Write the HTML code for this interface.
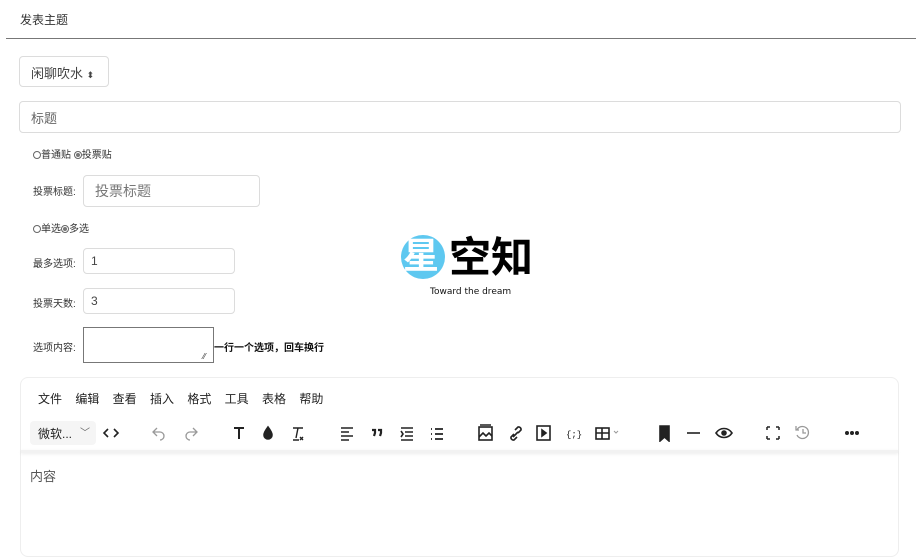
<!DOCTYPE html><html><head><meta charset="utf-8"><style>
body{margin:0;width:916px;height:531px;overflow:hidden;background:#fff;font-family:"Liberation Sans","Noto Sans CJK SC",sans-serif;color:#222;position:relative}
.a{position:absolute}
.box{position:absolute;border:1px solid #dcdcdc;border-radius:4px;box-sizing:border-box;background:#fff}
.s{font-size:10px;color:#333}
.t{font-size:13px;color:#555}
.rad{display:inline-block;width:8px;height:8px;border:1px solid #666;border-radius:50%;vertical-align:-1px;box-sizing:border-box;position:relative}
.rad.on::after{content:"";position:absolute;left:1px;top:1px;width:4px;height:4px;border-radius:50%;background:#777}
.ic{position:absolute;top:424px}
</style></head><body>
<div class="a" style="left:20px;top:11px;font-size:12px;color:#333">发表主题</div>
<div class="a" style="left:6px;top:38px;width:910px;height:1px;background:#777"></div>
<div class="box" style="left:19px;top:56px;width:90px;height:31px"></div>
<div class="a t" style="left:31px;top:63px;color:#444">闲聊吹水 <span style="font-size:9px">⬍</span></div>
<div class="box" style="left:19px;top:101px;width:882px;height:32px"></div>
<div class="a t" style="left:31px;top:108px;color:#666">标题</div>
<div class="a s" style="left:33px;top:146px"><span class="rad"></span>普通贴 <span class="rad on"></span>投票贴</div>
<div class="a s" style="left:33px;top:183px">投票标题:</div>
<div class="box" style="left:83px;top:175px;width:177px;height:32px"></div>
<div class="a" style="left:95px;top:181px;font-size:14px;color:#777">投票标题</div>
<div class="a s" style="left:33px;top:220px"><span class="rad"></span>单选<span class="rad on"></span>多选</div>
<div class="a s" style="left:33px;top:255px">最多选项:</div>
<div class="box" style="left:83px;top:248px;width:152px;height:26px"></div>
<div class="a" style="left:91px;top:254px;font-size:12px;color:#444">1</div>
<div class="a s" style="left:33px;top:295px">投票天数:</div>
<div class="box" style="left:83px;top:288px;width:152px;height:26px"></div>
<div class="a" style="left:91px;top:294px;font-size:12px;color:#444">3</div>
<div class="a s" style="left:33px;top:339px">选项内容:</div>
<div class="a" style="left:83px;top:327px;width:131px;height:36px;border:1px solid #777;box-sizing:border-box"></div>
<div class="a" style="left:203px;top:352px;font-size:8px;color:#333">⁄⁄</div>
<div class="a" style="left:214px;top:339px;font-size:10px;color:#111;font-weight:bold">一行一个选项，回车换行</div>
<!-- logo -->
<div class="a" style="left:401px;top:235px;width:44px;height:44px;border-radius:50%;background:#5ec8f0"></div>
<div class="a" style="left:403px;top:236px;font-size:36px;line-height:40px;color:#fff;font-weight:bold">星</div>
<div class="a" style="left:449px;top:236px;font-size:42px;line-height:44px;color:#000;font-weight:bold;letter-spacing:0">空知</div>
<div class="a" style="left:430px;top:287px;font-size:9px;color:#111;font-family:'DejaVu Sans',sans-serif">Toward the dream</div>
<!-- editor -->
<div class="a" style="left:20px;top:377px;width:879px;height:180px;border:1px solid #eee;border-radius:8px;box-sizing:border-box"></div>
<div class="a" style="left:21px;top:450px;width:877px;height:3px;background:#f2f2f2;box-shadow:0 1px 3px rgba(0,0,0,.08)"></div>
<div class="a" style="left:38px;top:390px;font-size:12px;color:#222;word-spacing:0">文件&nbsp;&nbsp;&nbsp; 编辑&nbsp;&nbsp;&nbsp; 查看&nbsp;&nbsp;&nbsp; 插入&nbsp;&nbsp;&nbsp; 格式&nbsp;&nbsp;&nbsp; 工具&nbsp;&nbsp;&nbsp; 表格&nbsp;&nbsp;&nbsp; 帮助</div>
<div class="a" style="left:30px;top:421px;width:66px;height:24px;background:#f5f5f5;border-radius:4px"></div>
<div class="a" style="left:38px;top:425px;font-size:12px;color:#222">微软...</div>
<div class="a" style="left:80px;top:424px;font-size:10px;color:#666">﹀</div>
<svg class="ic" style="left:0" width="916" height="18" viewBox="0 424 916 18" fill="none" stroke="#222" stroke-width="1.6">
<path d="M108 429l-4 4 4 4M114 429l4 4-4 4"/>
<g stroke="#999" stroke-width="1.3"><path d="M157 428l-4 4 4 4M153 432h7a4 4 0 010 8"/><path d="M193 428l4 4-4 4M197 432h-7a4 4 0 000 8"/></g>
<path d="M234 428h10M239 428v11" stroke-width="2"/>
<path d="M268 427c-3 4-4 6-4 8a4 4 0 008 0c0-2-1-4-4-8z" fill="#222"/>
<path d="M293 428h10M298 428l-2 10M293 440h6M300 437l3 3M303 437l-3 3" stroke-width="1.4"/>
<path d="M341 428h12M341 432h8M341 436h12M341 440h8"/>
<path d="M372 430h3v3l-1 3M378 430h3v3l-1 3" stroke-width="2.2"/>
<path d="M401 428h12M405 432h8M405 436h8M401 440h12M401 431l2 3-2 3"/>
<path d="M431 429h1M431 434h1M431 439h1M435 429h8M435 434h8M435 439h8" stroke-width="1.8"/>
<rect x="479" y="427" width="13" height="13"/><path d="M479 437l4-4 3 3 3-3 3 3M480 425h11"/>
<path d="M514 434l-3 3a2.5 2.5 0 003 3l3-3M518 433l3-3a2.5 2.5 0 00-3-3l-3 3M513 437l5-5"/>
<rect x="537" y="426" width="13" height="14"/><path d="M542 430v6l4-3z" fill="#222"/>
<text x="566" y="437" font-size="9" fill="#222" stroke="none" font-family="Liberation Mono">{;}</text>
<rect x="596" y="428" width="13" height="11"/><path d="M596 433h13M602 428v11"/><path d="M614 431l2 2 2-2" stroke="#999" stroke-width="1"/>
<path d="M660 426h9v15l-4.5-4-4.5 4z" fill="#222"/>
<path d="M687 433h13"/>
<path d="M716 433c4-6 12-6 16 0-4 6-12 6-16 0z"/><circle cx="724" cy="433" r="2" fill="#222"/>
<path d="M767 427h3M767 427v3M779 427h-3M779 427v3M767 439h3M767 439v-3M779 439h-3M779 439v-3" stroke-width="1.5"/>
<g stroke="#999" stroke-width="1.3"><path d="M797 430a6 6 0 110 5M803 429v4h3M796 426v4h3"/></g>
<circle cx="847" cy="433" r="1.2" fill="#222"/><circle cx="852" cy="433" r="1.2" fill="#222"/><circle cx="857" cy="433" r="1.2" fill="#222"/>
</svg>
<div class="a" style="left:30px;top:466px;font-size:13px;color:#555">内容</div>
</body></html>
